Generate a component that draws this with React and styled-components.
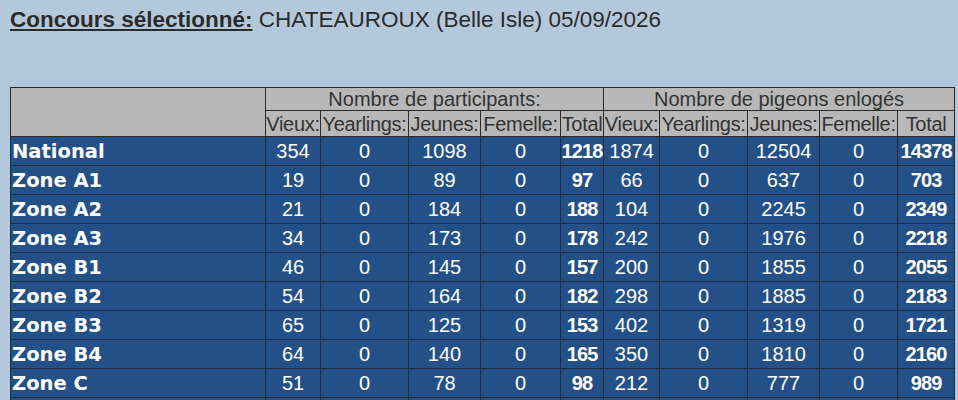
import React from "react";
import styled, { createGlobalStyle } from "styled-components";

const GlobalStyle = createGlobalStyle`
  body {
    margin: 0;
    background: #b4c8dc;
    font-family: "Liberation Sans", Arial, sans-serif;
  }
`;

const rows = [
  ["National", 354, 0, 1098, 0, 1218, 1874, 0, 12504, 0, 14378],
  ["Zone A1", 19, 0, 89, 0, 97, 66, 0, 637, 0, 703],
  ["Zone A2", 21, 0, 184, 0, 188, 104, 0, 2245, 0, 2349],
  ["Zone A3", 34, 0, 173, 0, 178, 242, 0, 1976, 0, 2218],
  ["Zone B1", 46, 0, 145, 0, 157, 200, 0, 1855, 0, 2055],
  ["Zone B2", 54, 0, 164, 0, 182, 298, 0, 1885, 0, 2183],
  ["Zone B3", 65, 0, 125, 0, 153, 402, 0, 1319, 0, 1721],
  ["Zone B4", 64, 0, 140, 0, 165, 350, 0, 1810, 0, 2160],
  ["Zone C", 51, 0, 78, 0, 98, 212, 0, 777, 0, 989],
];

const widths = [255, 55, 88, 72, 80, 43, 56, 88, 72, 78, 57];
const subHeads = ["Vieux:", "Yearlings:", "Jeunes:", "Femelle:", "Total"];

export default function App() {
  return (
    <Page>
      <GlobalStyle />
      <Title>
        <Label>Concours sélectionné:</Label> CHATEAUROUX (Belle Isle) 05/09/2026
      </Title>
      <Table>
        <colgroup>
          {widths.map((w, i) => (
            <col key={i} style={{ width: w }} />
          ))}
        </colgroup>
        <thead>
          <tr>
            <HeadCell rowSpan={2} />
            <GroupCell colSpan={5}>Nombre de participants:</GroupCell>
            <GroupCell colSpan={5}>Nombre de pigeons enlogés</GroupCell>
          </tr>
          <tr>
            {[...subHeads, ...subHeads].map((h, i) => (
              <SubCell key={i}>{h}</SubCell>
            ))}
          </tr>
        </thead>
        <tbody>
          {rows.map((r) => (
            <tr key={r[0]}>
              <ZoneCell>{r[0]}</ZoneCell>
              {r.slice(1).map((v, i) => (
                <Cell key={i} $total={i === 4 || i === 9}>
                  {v}
                </Cell>
              ))}
            </tr>
          ))}
          <tr>
            <ZoneCell />
            {widths.slice(1).map((_, i) => (
              <Cell key={i} />
            ))}
          </tr>
        </tbody>
      </Table>
    </Page>
  );
}

const Page = styled.div`
  padding: 5px 0 0 10px;
  height: 395px;
  overflow: hidden;
`;

const Title = styled.div`
  font-size: 22.5px;
  color: #2b2b2b;
  line-height: 30px;
  margin-bottom: 52px;
`;

const Label = styled.span`
  font-weight: bold;
  text-decoration: underline;
`;

const Table = styled.table`
  border-collapse: collapse;
  table-layout: fixed;
  width: 944px;
  font-size: 20px;
`;

const HeadCell = styled.th`
  background: #b8b8b8;
  border: 1px solid #2a2a2a;
  padding: 0;
`;

const GroupCell = styled(HeadCell)`
  font-weight: normal;
  color: #333;
  height: 22px;
  line-height: 20px;
`;

const SubCell = styled(HeadCell)`
  font-weight: normal;
  color: #333;
  height: 25px;
  line-height: 22px;
  white-space: nowrap;
  overflow: hidden;
  letter-spacing: -0.3px;
`;

const ZoneCell = styled.td`
  background: #245088;
  border: 1px solid #1c2c44;
  color: #fff;
  font-family: "DejaVu Sans", sans-serif;
  font-weight: bold;
  font-size: 19.5px;
  height: 28px;
  padding: 0 1px;
  white-space: nowrap;
`;

const Cell = styled.td`
  background: #245088;
  border: 1px solid #1c2c44;
  color: #fff;
  text-align: center;
  padding: 0;
  height: 28px;
  white-space: nowrap;
  font-weight: ${(p) => (p.$total ? "bold" : "normal")};
  letter-spacing: ${(p) => (p.$total ? "-0.9px" : "0")};
`;
